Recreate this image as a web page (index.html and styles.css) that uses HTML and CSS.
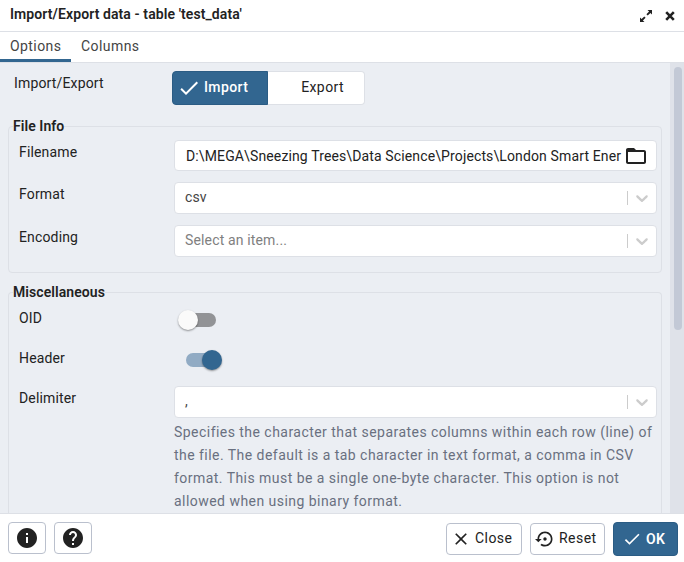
FILE: index.html
```html
<!DOCTYPE html>
<html lang="en">
<head>
<meta charset="utf-8">
<title>Import/Export data</title>
<link rel="stylesheet" href="styles.css">
</head>
<body>
<div class="dialog">
  <header class="titlebar">
    <h1 class="title">Import/Export data - table 'test_data'</h1>
    <svg class="ic-expand" viewBox="0 0 14 14"><path d="M8.500 1H13v4.500L11.400 3.900 8.700 6.600 7.400 5.300 10.100 2.600zM5.500 13H1V8.500l1.600 1.600 2.700-2.700 1.300 1.300-2.700 2.700z"/></svg>
    <svg class="ic-x" viewBox="0 0 10 10"><path d="M1.200 1.200 8.800 8.800M8.800 1.200 1.200 8.800"/></svg>
  </header>
  <nav class="tabs">
    <div class="tab tab-options active">Options</div>
    <div class="tab tab-columns">Columns</div>
  </nav>
  <main class="body">
    <div class="content">
      <div class="mode">
        <span class="mode-label">Import/Export</span>
        <div class="toggle">
          <div class="seg seg-on"><svg class="mat" viewBox="3 4 19 17"><path d="M9 16.170 4.830 12l-1.420 1.410L9 19 21 7l-1.410-1.410z"/></svg><span>Import</span></div>
          <div class="seg seg-off"><span>Export</span></div>
        </div>
      </div>
      <section class="group group-file">
        <h2 class="legend">File Info</h2>
        <div class="row row-filename">
          <span class="label">Filename</span>
          <div class="field input"><span class="path">D:\MEGA\Sneezing Trees\Data Science\Projects\London Smart Ener</span><svg class="ic-folder" viewBox="0 0 24 24"><path d="M20 6h-8l-2-2H4c-1.100 0-1.990.9-1.990 2L2 18c0 1.100.9 2 2 2h16c1.100 0 2-.9 2-2V8c0-1.100-.9-2-2-2zm0 12H4V8h16v10z"/></svg></div>
        </div>
        <div class="row row-format">
          <span class="label">Format</span>
          <div class="field select"><span class="value">csv</span><i class="sep"></i><svg class="chev" viewBox="0 0 20 20"><path d="M4.516 7.548c.436-.446 1.043-.481 1.576 0L10 11.295l3.908-3.747c.533-.481 1.141-.446 1.574 0 .436.445.408 1.197 0 1.615-.406.418-4.695 4.502-4.695 4.502a1.095 1.095 0 0 1-1.576 0S4.924 9.581 4.516 9.163s-.436-1.170 0-1.615z"/></svg></div>
        </div>
        <div class="row row-encoding">
          <span class="label">Encoding</span>
          <div class="field select"><span class="value placeholder">Select an item...</span><i class="sep"></i><svg class="chev" viewBox="0 0 20 20"><path d="M4.516 7.548c.436-.446 1.043-.481 1.576 0L10 11.295l3.908-3.747c.533-.481 1.141-.446 1.574 0 .436.445.408 1.197 0 1.615-.406.418-4.695 4.502-4.695 4.502a1.095 1.095 0 0 1-1.576 0S4.924 9.581 4.516 9.163s-.436-1.170 0-1.615z"/></svg></div>
        </div>
      </section>
      <section class="group group-misc">
        <h2 class="legend">Miscellaneous</h2>
        <div class="row row-oid">
          <span class="label">OID</span>
          <div class="switch"><i class="knob"></i></div>
        </div>
        <div class="row row-header">
          <span class="label">Header</span>
          <div class="switch on"><i class="knob"></i></div>
        </div>
        <div class="row row-delimiter">
          <span class="label">Delimiter</span>
          <div class="stack">
            <div class="field select"><span class="value">,</span><i class="sep"></i><svg class="chev" viewBox="0 0 20 20"><path d="M4.516 7.548c.436-.446 1.043-.481 1.576 0L10 11.295l3.908-3.747c.533-.481 1.141-.446 1.574 0 .436.445.408 1.197 0 1.615-.406.418-4.695 4.502-4.695 4.502a1.095 1.095 0 0 1-1.576 0S4.924 9.581 4.516 9.163s-.436-1.170 0-1.615z"/></svg></div>
            <p class="help">Specifies the character that separates columns within each row (line) of<br>the file. The default is a tab character in text format, a comma in CSV<br>format. This must be a single one-byte character. This option is not<br>allowed when using binary format.</p>
          </div>
        </div>
      </section>
    </div>
    <div class="scrollbar"><div class="thumb"></div></div>
  </main>
  <footer class="footer">
    <div class="btn btn-icon"><svg viewBox="0 0 24 24"><path d="M12 2C6.480 2 2 6.480 2 12s4.480 10 10 10 10-4.480 10-10S17.520 2 12 2zm1 15h-2v-6h2v6zm0-8h-2V7h2v2z"/></svg></div>
    <div class="btn btn-icon"><svg viewBox="0 0 24 24"><path d="M12 2C6.480 2 2 6.480 2 12s4.480 10 10 10 10-4.480 10-10S17.520 2 12 2zm1 17h-2v-2h2v2zm2.070-7.750-.9.920C13.450 12.900 13 13.500 13 15h-2v-.5c0-1.100.450-2.100 1.170-2.830l1.240-1.260c.370-.360.590-.860.590-1.410 0-1.100-.9-2-2-2s-2 .9-2 2H8c0-2.210 1.790-4 4-4s4 1.790 4 4c0 .880-.360 1.680-.930 2.250z"/></svg></div>
    <div class="spacer"></div>
    <div class="btn btn-close"><svg viewBox="0 0 24 24"><path d="M19 6.410 17.590 5 12 10.590 6.410 5 5 6.410 10.590 12 5 17.590 6.410 19 12 13.410 17.590 19 19 17.590 13.410 12z"/></svg><span>Close</span></div>
    <div class="btn btn-reset"><svg viewBox="0 0 24 24"><path d="M14 12c0-1.100-.9-2-2-2s-2 .9-2 2 .9 2 2 2 2-.9 2-2zm-2-9c-4.970 0-9 4.030-9 9H0l4 4 4-4H5c0-3.870 3.130-7 7-7s7 3.130 7 7-3.130 7-7 7c-1.510 0-2.910-.490-4.060-1.300l-1.420 1.440C8.040 20.300 9.940 21 12 21c4.970 0 9-4.030 9-9s-4.030-9-9-9z"/></svg><span>Reset</span></div>
    <div class="btn btn-ok"><svg viewBox="0 0 24 24"><path d="M9 16.170 4.830 12l-1.420 1.410L9 19 21 7l-1.410-1.410z"/></svg><span>OK</span></div>
  </footer>
</div>
</body>
</html>
```
FILE: styles.css
```css
* { box-sizing: border-box; }
body {
  margin: 0;
  font: 14px/20px Roboto, "Liberation Sans", sans-serif;
  color: #222;
  background: #fff;
}
svg { display: block; flex: none; fill: #222; }
.dialog { width: 684px; height: 562px; display: flex; flex-direction: column; overflow: hidden; }

.titlebar { height: 32px; flex: none; display: flex; align-items: center; padding: 0 9px 0 10px; border-bottom: 1px solid #dde0e6; }
.title { flex: 1; margin: 0 0 3px; font-size: 14px; line-height: 20px; font-weight: 600; letter-spacing: .09px; }
.ic-expand { width: 14px; height: 14px; margin-right: 12px; }
.ic-x { width: 10px; height: 10px; fill: none; stroke: #222; stroke-width: 2.6; }

.tabs { height: 31px; flex: none; display: flex; border-bottom: 1px solid #dde0e6; color: #444; letter-spacing: .43px; }
.tab { height: 30px; padding: 4px 10px 0; }
.tab-options { width: 71px; }
.tab.active { border-bottom: 3px solid #326690; }

.body { flex: 1; min-height: 0; display: flex; background: #ebeef3; overflow: hidden; }
.content { flex: 1; min-width: 0; padding: 8px 8px 0; }
.mode { display: flex; height: 34px; }
.mode-label { width: 164px; padding: 2px 0 0 6px; letter-spacing: .15px; }
.toggle { display: flex; width: 193px; height: 34px; }
.seg { display: flex; align-items: center; letter-spacing: .4px; padding-bottom: 2px; }
.seg-on { width: 96px; padding-left: 7px; gap: 5px; border-radius: 4px 0 0 4px; background: #326690; color: #fff; font-weight: 500; border: 1px solid #2b5c84; }
.seg-on .mat { width: 19px; height: 17px; fill: #fff; margin-top: 2px; }
.seg-off { width: 97px; justify-content: flex-end; padding-right: 20px; border: 1px solid #dde0e6; border-left: 0; border-radius: 0 4px 4px 0; background: #fff; }

.group { border: 1px solid #dde0e6; border-radius: 4px; padding: 0 4px 0 10px; }
.group-file { margin-top: 21px; height: 147px; }
.group-misc { margin-top: 19px; height: 260px; border-bottom: 0; border-radius: 4px 4px 0 0; }
.legend { width: max-content; margin: -11px 0 0 -6px; height: 20px; font-size: 14px; line-height: 20px; font-weight: 600; letter-spacing: .07px; background: #ebeef3; }
.row { display: grid; grid-template-columns: 155px minmax(0, 1fr); align-items: start; }
.label { letter-spacing: .15px; }
.field { display: flex; align-items: center; border: 1px solid #dde0e6; border-radius: 4px; background: #fff; }
.row-filename { margin-top: 4px; height: 42px; }
.row-filename .label, .row-format .label, .row-encoding .label { padding-top: 2px; }
.row-format { height: 43px; }
.input { height: 31px; padding: 0 8px 0 11px; }
.path { flex: 1; white-space: nowrap; letter-spacing: .13px; }
.ic-folder { width: 24px; height: 24px; }
.select { height: 32px; padding: 0 4px 2px 10px; color: #444; }
.value { flex: 1; letter-spacing: .15px; }
.placeholder { color: #808080; }
.sep { width: 1px; height: 14px; background: #ccc; margin: 2px 4px 0 0; }
.chev { width: 20px; height: 20px; fill: #ccc; margin-top: 2px; }

.row-oid { margin-top: 6px; height: 40px; }
.row-header { height: 38px; }
.switch { width: 30px; height: 14px; margin: 5px 0 0 12px; border-radius: 7px; background: #929396; display: flex; align-items: center; }
.knob { flex: none; width: 20px; height: 20px; margin-left: -8px; border-radius: 50%; background: #fafafa; box-shadow: 0 1px 2px rgba(0,0,0,.4); }
.switch.on { background: #91abc4; }
.switch.on .knob { margin-left: 16px; background: #326690; }
.row-delimiter .label { padding-top: 2px; }
.help { margin: 3px -4px 0 0; line-height: 23px; letter-spacing: .46px; color: #697080; white-space: nowrap; }

.scrollbar { flex: none; width: 14px; padding: 4px 2px 0 4px; background: #dfe2e9; }
.thumb { height: 263px; border-radius: 4px; background: #c3c9d6; }

.footer { height: 49px; flex: none; display: flex; align-items: flex-start; gap: 8px; padding: 8px 6px 0 8px; border-top: 1px solid #dde0e6; background: #fff; }
.btn { display: flex; align-items: center; height: 32px; border: 1px solid #bac0cd; border-radius: 4px; letter-spacing: .45px; }
.btn span { margin-bottom: 1px; }
.btn-icon { width: 38px; justify-content: center; }
.btn-icon svg { width: 24px; height: 24px; }
.spacer { flex: 1; }
.btn-close svg, .btn-reset svg, .btn-ok svg { width: 20px; height: 20px; }
.btn-close, .btn-reset { height: 32px; margin-top: 1px; padding-left: 4px; gap: 4px; }
.btn-close { width: 76px; }
.btn-reset { width: 75px; }
.btn-ok { width: 65px; height: 34px; padding-left: 8px; gap: 4px; background: #326690; border-color: #2b5c84; color: #fff; font-weight: 600; letter-spacing: .3px; }
.btn-ok svg { fill: #fff; }
.btn-close span, .btn-reset span { margin-bottom: 2px; }
```
